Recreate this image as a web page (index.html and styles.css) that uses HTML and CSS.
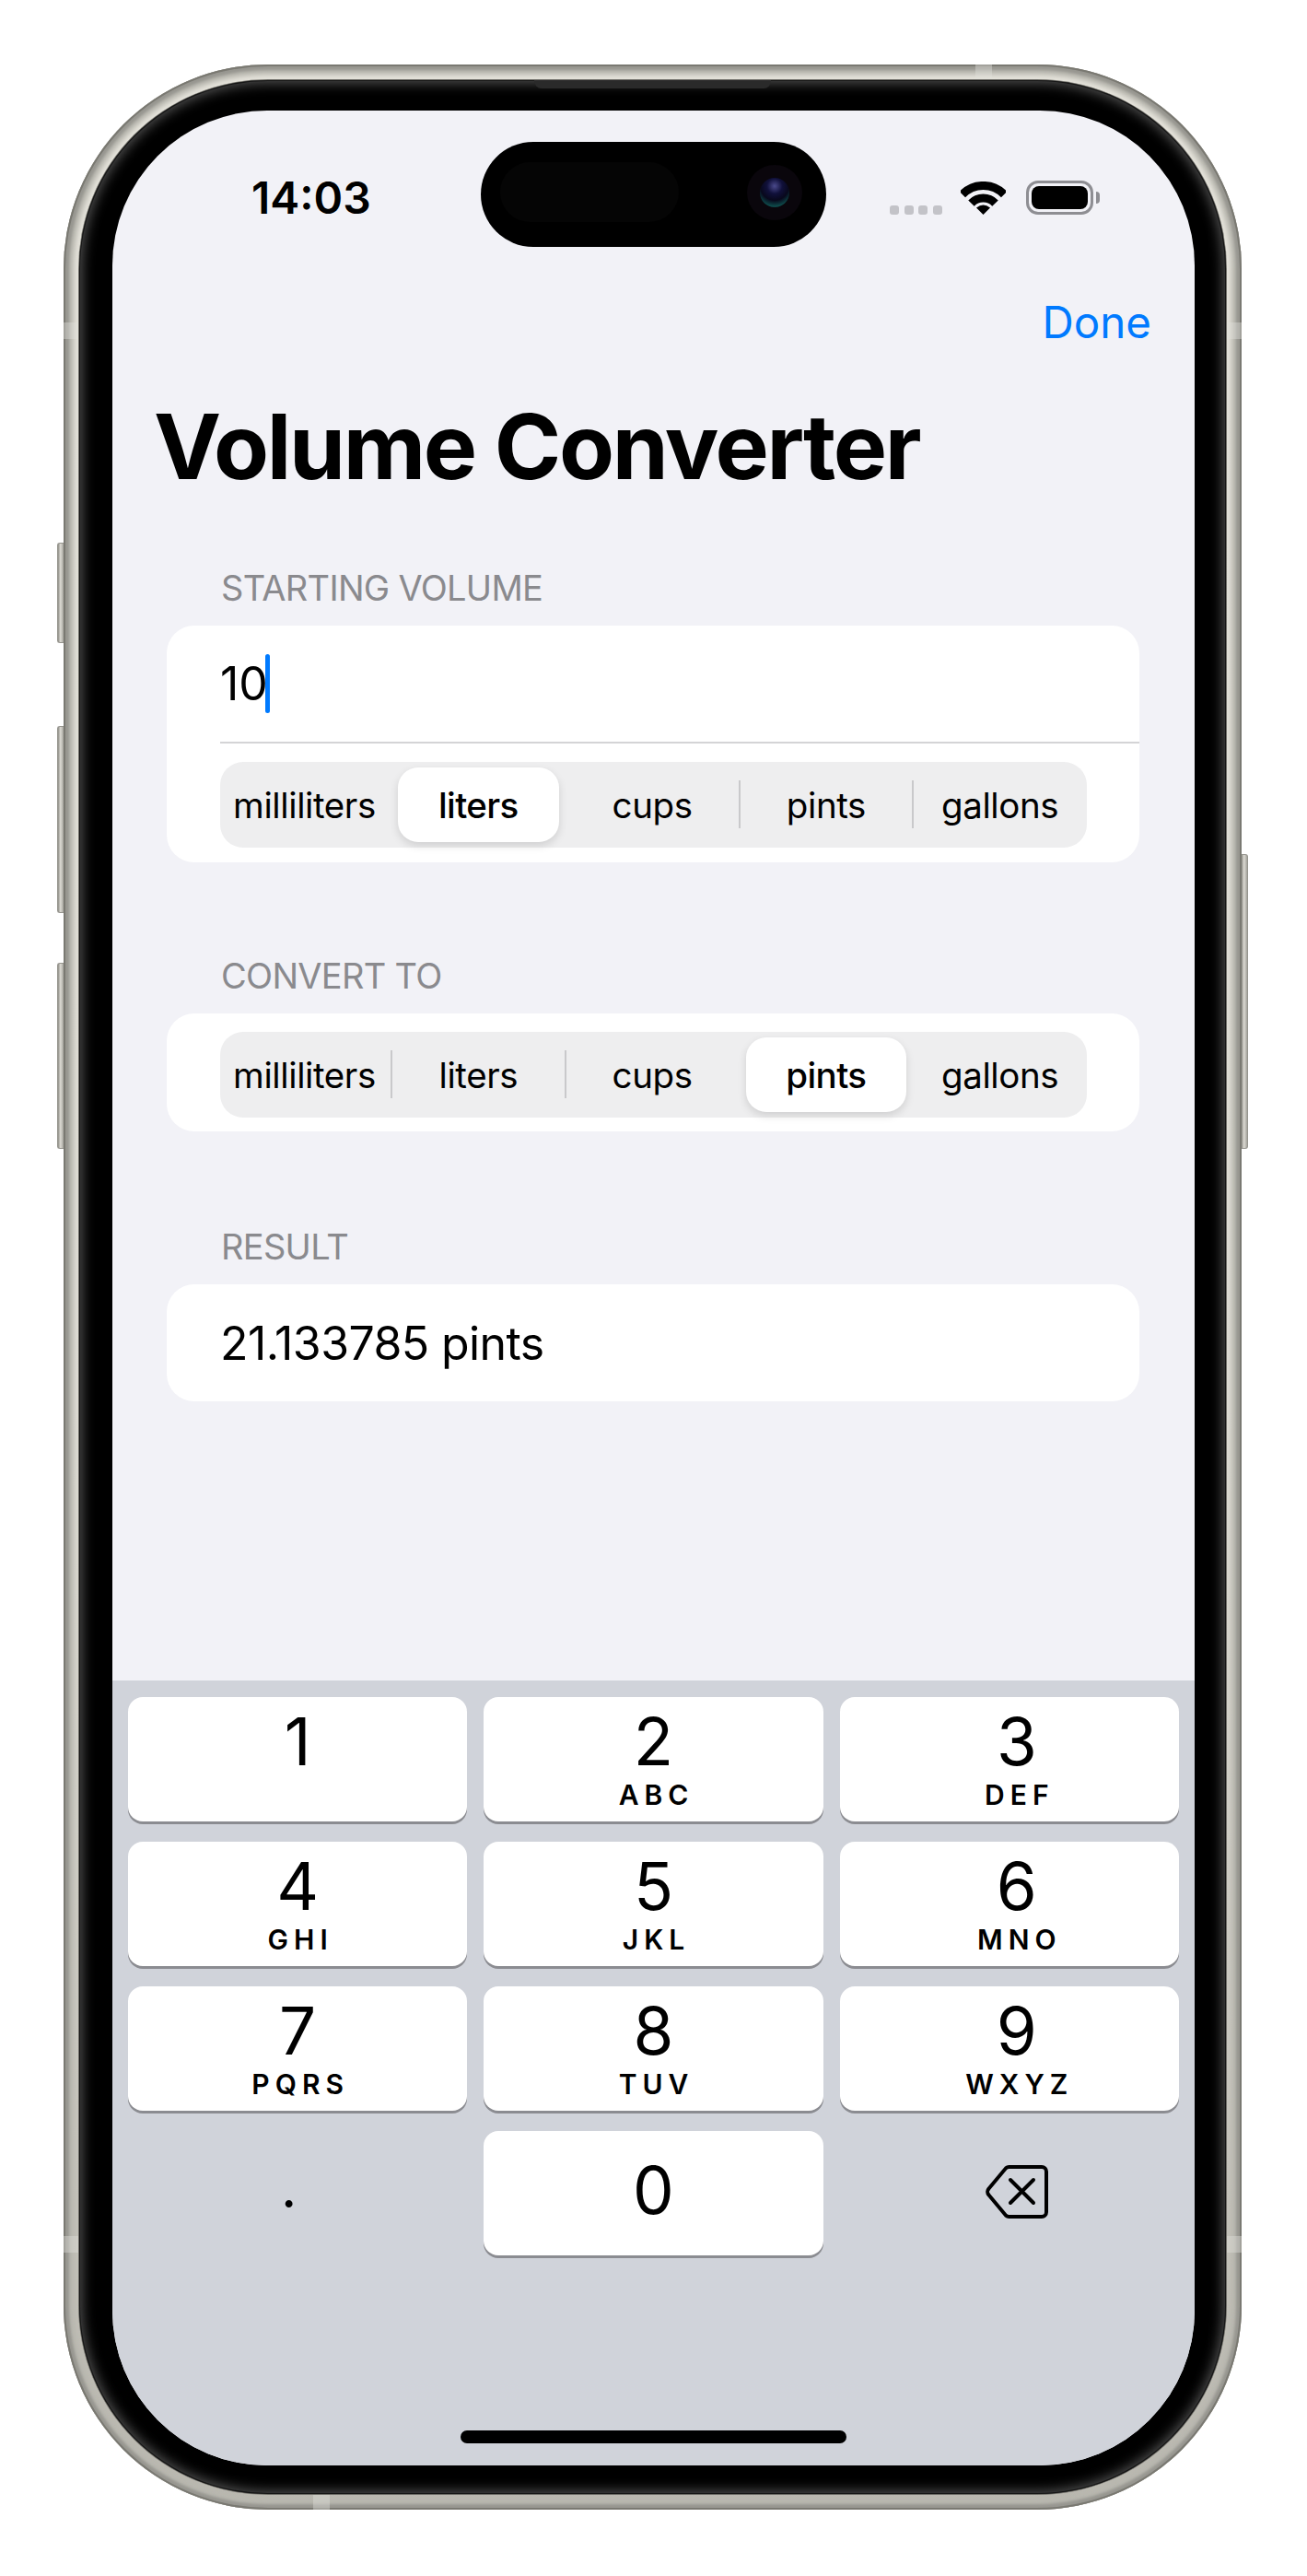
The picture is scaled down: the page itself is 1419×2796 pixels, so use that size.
FILE: index.html
```html
<!DOCTYPE html>
<html lang="en">
<head>
    <meta charset="UTF-8">
    <meta name="viewport" content="width=device-width, initial-scale=1.0">
    <title>Volume Converter</title>
    <link rel="stylesheet" href="styles.css">
</head>
<body>
    <div class="phone">
        <!-- side buttons and antenna bands -->
        <span class="side-btn btn-action"></span>
        <span class="side-btn btn-vol-up"></span>
        <span class="side-btn btn-vol-down"></span>
        <span class="side-btn btn-power"></span>
        <span class="band band-top"></span>
        <span class="band band-bottom"></span>
        <span class="band band-left-top"></span>
        <span class="band band-right-top"></span>
        <span class="band band-right-bottom"></span>
        <span class="band band-left-bottom"></span>

        <div class="bezel">
            <span class="speaker"></span>
            <div class="screen">
                <div class="island">
                    <span class="island-sensor"></span>
                    <span class="island-camera"><span class="island-lens"></span></span>
                </div>

                <div class="status-bar">
                    <span class="time">14:03</span>
                    <div class="status-icons">
                        <div class="signal"><span></span><span></span><span></span><span></span></div>
                        <svg class="wifi" viewBox="0 0 49 36" width="49" height="36">
                            <path d="M1.8 14.1A31.5 31.5 0 0 1 47.2 14.1" fill="none" stroke="#000" stroke-width="9"/>
                            <path d="M11.5 23.6A18 18 0 0 1 37.5 23.6" fill="none" stroke="#000" stroke-width="9"/>
                            <path d="M24.5 36L17 28.5Q24.5 22.5 32 28.5Z" fill="#000"/>
                        </svg>
                        <div class="battery"><span class="battery-fill"></span></div>
                        <span class="battery-nub"></span>
                    </div>
                </div>

                <div class="nav-bar"><a class="done">Done</a></div>
                <h1>Volume Converter</h1>

                <h2 class="section-label">STARTING VOLUME</h2>
                <div class="card">
                    <div class="field-row"><span class="field-value">10</span><span class="caret"></span></div>
                    <div class="card-segment first-segment">
                        <div class="segmented">
                            <div class="seg">milliliters</div>
                            <div class="seg selected">liters</div>
                            <div class="seg">cups</div>
                            <div class="seg sep">pints</div>
                            <div class="seg sep">gallons</div>
                        </div>
                    </div>
                </div>

                <h2 class="section-label spaced">CONVERT TO</h2>
                <div class="card card-segment">
                    <div class="segmented">
                        <div class="seg">milliliters</div>
                        <div class="seg sep">liters</div>
                        <div class="seg sep">cups</div>
                        <div class="seg selected">pints</div>
                        <div class="seg">gallons</div>
                    </div>
                </div>

                <h2 class="section-label spaced result-label">RESULT</h2>
                <div class="card result">21.133785 pints</div>

                <div class="keyboard">
                    <div class="keys">
                        <div class="key"><span class="digit">1</span></div>
                        <div class="key"><span class="digit">2</span><span class="letters">ABC</span></div>
                        <div class="key"><span class="digit">3</span><span class="letters">DEF</span></div>
                        <div class="key"><span class="digit">4</span><span class="letters">GHI</span></div>
                        <div class="key"><span class="digit">5</span><span class="letters">JKL</span></div>
                        <div class="key"><span class="digit">6</span><span class="letters">MNO</span></div>
                        <div class="key"><span class="digit">7</span><span class="letters">PQRS</span></div>
                        <div class="key"><span class="digit">8</span><span class="letters">TUV</span></div>
                        <div class="key"><span class="digit">9</span><span class="letters">WXYZ</span></div>
                        <div class="key key-clear key-dot">.</div>
                        <div class="key key-zero"><span class="digit">0</span></div>
                        <div class="key key-clear key-back">
                            <svg viewBox="0 0 68 58" width="68" height="58">
                                <path d="M25.5 2H61a5 5 0 0 1 5 5V51a5 5 0 0 1-5 5H25.5a5 5 0 0 1-3.4-1.3L3.6 32.5a5 5 0 0 1 0-7L22.1 3.3A5 5 0 0 1 25.5 2Z" fill="none" stroke="#000" stroke-width="4"/>
                                <path d="M27 16L52 41M52 16L27 41" fill="none" stroke="#000" stroke-width="4" stroke-linecap="round"/>
                            </svg>
                        </div>
                    </div>
                    <span class="home-indicator"></span>
                </div>
            </div>
        </div>
    </div>
</body>
</html>
```

FILE: styles.css
```css
* {
    box-sizing: border-box;
}
body {
    margin: 0;
    background-color: #fff;
    font-family: Inter, "Liberation Sans", sans-serif;
    color: #000;
}

/* device frame */
.phone {
    position: relative;
    width: 1279px;
    height: 2654px;
    margin: 70px 0 0 69px;
    padding: 17px;
    border-radius: 222px;
    background: linear-gradient(180deg, #e4e2da 0%, #dedcd4 55%, #b9b7af 100%);
    box-shadow:
        inset 0 0 0 2px #7a7972,
        inset 0 0 3px 6px #979690,
        inset 0 0 5px 11px #b8b7af;
}
.bezel {
    position: relative;
    width: 100%;
    height: 100%;
    padding: 33px 34px 31px 36px;
    border-radius: 205px;
    background-color: #000;
    box-shadow:
        0 0 0 1px #6e6d67,
        inset 0 0 0 1px #151515,
        inset 0 0 14px 3px #555;
}
.speaker {
    position: absolute;
    top: 0;
    left: 494px;
    width: 257px;
    height: 9px;
    border-radius: 0 0 8px 8px;
    background-color: #2a2a2a;
}
.screen {
    position: relative;
    display: flex;
    flex-direction: column;
    height: 100%;
    border-radius: 168px;
    background-color: #f2f2f7;
    overflow: hidden;
}

.side-btn {
    position: absolute;
    width: 7px;
    background: linear-gradient(90deg, #8f8e87 0%, #dcdad3 45%, #a3a29b 100%);
    border: 1px solid #96958e;
}
.btn-action,
.btn-vol-up,
.btn-vol-down {
    left: -7px;
    border-right: 0;
    border-radius: 3px 0 0 3px;
}
.btn-action {
    top: 519px;
    height: 109px;
}
.btn-vol-up {
    top: 718px;
    height: 203px;
}
.btn-vol-down {
    top: 975px;
    height: 202px;
}
.btn-power {
    right: -7px;
    top: 857px;
    height: 320px;
    border-left: 0;
    border-radius: 0 3px 3px 0;
}

.band {
    position: absolute;
    background-color: rgba(226, 225, 219, 0.4);
}
.band-top,
.band-bottom {
    width: 18px;
    height: 17px;
}
.band-top {
    top: 0;
    left: 990px;
}
.band-bottom {
    bottom: 0;
    left: 271px;
}
.band-left-top,
.band-left-bottom {
    left: 0;
    width: 17px;
    height: 18px;
}
.band-right-top,
.band-right-bottom {
    right: 0;
    width: 17px;
    height: 18px;
}
.band-left-top,
.band-right-top {
    top: 280px;
}
.band-left-bottom,
.band-right-bottom {
    top: 2357px;
}

/* dynamic island */
.island {
    position: absolute;
    top: 34px;
    left: 400px;
    width: 375px;
    height: 114px;
    border-radius: 57px;
    background-color: #000;
}
.island-sensor {
    position: absolute;
    top: 22px;
    left: 21px;
    width: 194px;
    height: 65px;
    border-radius: 33px;
    background-color: #050505;
}
.island-camera {
    position: absolute;
    top: 25px;
    left: 289px;
    width: 60px;
    height: 60px;
    border-radius: 50%;
    background-color: #0a060c;
}
.island-lens {
    position: absolute;
    top: 14px;
    left: 14px;
    width: 32px;
    height: 32px;
    border-radius: 50%;
    background: radial-gradient(circle at 50% 28%, #4b4a8c 0, #10103a 30%, #08081c 55%, #0e4a4a 78%, #12122e 100%);
}

/* status bar */
.status-bar {
    display: flex;
    justify-content: space-between;
    align-items: flex-end;
    height: 37px;
    margin-top: 76px;
    padding: 0 103px 0 151px;
}
.time {
    font-size: 48px;
    font-weight: 600;
    line-height: 37px;
}
.status-icons {
    display: flex;
    align-items: flex-end;
}
.signal {
    display: flex;
    gap: 5.6px;
    margin-right: 20px;
}
.signal span {
    width: 10px;
    height: 10px;
    border-radius: 3px;
    background-color: #c3c3c8;
}
.wifi {
    display: block;
    margin-right: 22px;
}
.battery {
    width: 73px;
    height: 37px;
    padding: 3px;
    border: 3px solid #8e8e93;
    border-radius: 13px;
}
.battery-fill {
    display: block;
    height: 100%;
    border-radius: 8px;
    background-color: #000;
}
.battery-nub {
    width: 4px;
    height: 13px;
    margin: 0 0 12px 3px;
    border-radius: 0 4px 4px 0;
    background-color: #8e8e93;
}

/* page content */
.nav-bar {
    margin-top: 87px;
    padding-right: 47px;
    text-align: right;
}
.done {
    font-size: 47.5px;
    line-height: 60px;
    color: #007aff;
}
h1 {
    margin: 50px 0 0 45px;
    font-size: 98px;
    font-weight: 700;
    line-height: 110px;
    letter-spacing: -2.3px;
}
.section-label {
    margin: 78px 0 21px 118px;
    font-size: 38px;
    font-weight: 400;
    line-height: 40px;
    letter-spacing: -0.7px;
    color: #8a8a8e;
}
.section-label.spaced {
    margin-top: 103px;
}
.section-label.result-label {
    margin-top: 105px;
}
.card {
    margin: 0 60px 0 59px;
    border-radius: 30px;
    background-color: #fff;
}
.field-row {
    display: flex;
    align-items: center;
    height: 128px;
    margin-left: 58px;
    font-size: 50px;
    line-height: 64px;
    border-bottom: 2px solid #d4d4d6;
}
.caret {
    width: 5px;
    height: 64px;
    margin-left: -3px;
    border-radius: 3px;
    background-color: #007aff;
}
.card-segment {
    padding: 20px 57px 15px 58px;
}
.first-segment {
    padding-bottom: 16px;
}
.segmented {
    display: grid;
    grid-template-columns: 186px repeat(4, 1fr);
    height: 93px;
    border-radius: 25px;
    background-color: #eeeeef;
}
.seg {
    position: relative;
    display: flex;
    align-items: center;
    justify-content: center;
    margin: 6px 7px;
    border-radius: 22px;
    font-size: 38.5px;
    font-weight: 400;
    letter-spacing: -0.4px;
    white-space: nowrap;
}
.seg:first-child {
    margin-left: 4px;
}
.seg.selected {
    background-color: #fff;
    font-weight: 550;
    letter-spacing: -0.6px;
    box-shadow: 0 4px 10px rgba(0, 0, 0, 0.13);
}
.seg.sep::before {
    content: "";
    position: absolute;
    left: -8px;
    top: 14px;
    bottom: 15px;
    width: 2px;
    background-color: #c9c9cb;
}
.result {
    display: flex;
    align-items: center;
    height: 127px;
    padding-left: 58px;
    font-size: 50px;
    letter-spacing: -0.6px;
}

/* number pad */
.keyboard {
    display: flex;
    flex-direction: column;
    flex: 1;
    margin-top: 303px;
    padding: 18px 17px 24px;
    background-color: #d0d3da;
}
.keys {
    display: grid;
    grid-template-columns: repeat(3, 1fr);
    grid-auto-rows: 135px;
    gap: 22px 18px;
}
.key {
    display: flex;
    flex-direction: column;
    align-items: center;
    padding-top: 12px;
    border-radius: 16px;
    background-color: #fff;
    box-shadow: 0 3px 0 #8b8c91;
}
.key:nth-child(3n) {
    padding-left: 16px;
}
.digit {
    font-size: 71px;
    line-height: 72px;
}
.letters {
    margin-top: 8px;
    padding-left: 6px;
    font-size: 30px;
    font-weight: 600;
    line-height: 29px;
    letter-spacing: 6px;
}
.key-zero {
    padding-top: 28px;
}
.key-clear {
    background: none;
    box-shadow: none;
}
.key-dot {
    padding: 31px 19px 0 0;
    font-size: 60px;
    line-height: 60px;
}
.key.key-back {
    padding: 0 0 4px 16px;
    justify-content: center;
}
.home-indicator {
    width: 419px;
    height: 14px;
    margin-top: auto;
    align-self: center;
    border-radius: 7px;
    background-color: #000;
}
```
